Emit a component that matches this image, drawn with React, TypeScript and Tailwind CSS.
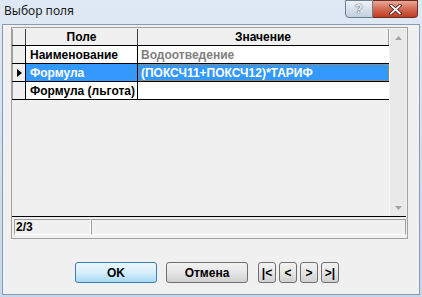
import React from 'react';

const gridFont = "font-['Liberation_Sans',sans-serif] font-bold text-[12px] leading-none";

const rows = [
  { field: 'Наименование', value: 'Водоотведение', selected: false, readOnly: true },
  { field: 'Формула', value: '(ПОКСЧ11+ПОКСЧ12)*ТАРИФ', selected: true, readOnly: false },
  { field: 'Формула (льгота)', value: '', selected: false, readOnly: false },
];

const NavButton = ({ label }: { label: string }) => (
  <button className="w-[18px] h-[21px] rounded-[3px] border border-[#707070] bg-gradient-to-b from-[#f2f2f2] via-[#e6e6e6] to-[#d0d0d0] flex items-center justify-center text-[12px] font-bold text-black font-['Liberation_Sans',sans-serif]">
    {label}
  </button>
);

const App = () => {
  return (
    <div className="w-[422px] h-[297px] bg-gradient-to-b from-[#dfe9f5] to-[#c4d7ec] flex flex-col overflow-hidden">
      {/* title bar */}
      <div className="h-[24px] flex justify-between items-start shrink-0">
        <span className="pl-[4px] pt-[5px] text-[12px] leading-none text-[#1a1a1a] font-['Noto_Sans',sans-serif]">Выбор поля</span>
        <div className="flex mr-[4px]">
          <div className="w-[28px] h-[18px] rounded-bl-[4px] border border-[#6e7d8f] bg-gradient-to-b from-[#edf2f8] to-[#c2d0e0] flex items-center justify-center">
            <span className="text-[12px] font-bold leading-none text-[#f4f7fb] font-['Liberation_Sans',sans-serif] [text-shadow:0_0_1px_#3a4654,0_0_1px_#3a4654]">?</span>
          </div>
          <div className="w-[45px] h-[18px] rounded-br-[4px] border border-l-0 border-[#6b2c22] bg-gradient-to-b from-[#e9a898] via-[#d26a53] to-[#c23a20] flex items-center justify-center">
            <svg width="13" height="11" viewBox="0 0 13 11">
              <path d="M2 1.5 L11 9.5 M11 1.5 L2 9.5" stroke="#4a1a12" strokeWidth="3.4" strokeLinecap="square" />
              <path d="M2 1.5 L11 9.5 M11 1.5 L2 9.5" stroke="#ffffff" strokeWidth="1.8" strokeLinecap="square" />
            </svg>
          </div>
        </div>
      </div>

      {/* client area */}
      <div className="mx-[2px] h-[271px] border border-[#8a9bb0] bg-[#f0f0f0] flex flex-col pl-[8px] pt-[2px]">
        {/* grid panel */}
        <div className="w-[397px] h-[212px] border border-[#a0a0a0] flex flex-col">
          <div className="h-[188px] flex pt-[1px]">
            {/* table */}
            <div className="w-[377px] flex flex-col">
              {/* header */}
              <div className={`h-[17px] flex border-b border-black bg-[#f0f0f0] ${gridFont}`}>
                <div className="w-[14px] border-r border-[#404040] border-l border-l-[#a0a0a0]" />
                <div className="w-[112px] border-r border-[#404040] flex items-center justify-center text-black">Поле</div>
                <div className="flex-1 border-r border-[#a0a0a0] flex items-center justify-center text-black">Значение</div>
              </div>
              {rows.map((r, i) => (
                <div key={i} className={`h-[18px] flex border-b border-black ${gridFont}`}>
                  <div className="w-[14px] border-r border-black border-l border-l-[#a0a0a0] bg-[#f0f0f0] flex items-center justify-center">
                    {r.selected && (
                      <svg width="5" height="8" viewBox="0 0 5 8">
                        <path d="M0 0 L5 4 L0 8 Z" fill="#000" />
                      </svg>
                    )}
                  </div>
                  <div className={`w-[112px] border-r border-black flex items-center pl-[4px] whitespace-nowrap ${r.selected ? 'bg-[#3399ff] text-white' : 'bg-white text-black'}`}>
                    {r.field}
                  </div>
                  <div className={`flex-1 flex items-center whitespace-nowrap ${r.selected ? 'bg-[#3399ff] text-white border border-dotted border-[#e07b1f] pl-[2px]' : 'bg-white pl-[3px]'} ${r.readOnly ? 'text-[#808080]' : ''}`}>
                    {r.value}
                  </div>
                </div>
              ))}
              <div className="flex-1 bg-[#f0f0f0]" />
            </div>
            {/* scrollbar */}
            <div className="w-[17px] bg-[#e9e9e9] border-l border-[#f7f7f7] flex flex-col justify-between">
              <div className="h-[17px] flex items-center justify-center">
                <svg width="7" height="4" viewBox="0 0 7 4">
                  <path d="M0 4 L3.5 0 L7 4 Z" fill="#a3a3a3" />
                </svg>
              </div>
              <div className="h-[17px] flex items-center justify-center">
                <svg width="7" height="4" viewBox="0 0 7 4">
                  <path d="M0 0 L3.5 4 L7 0 Z" fill="#a3a3a3" />
                </svg>
              </div>
            </div>
          </div>
          <div className="h-[1px] bg-black mr-[1px]" />
          {/* status bar */}
          <div className="flex-1 flex pl-[2px] pt-[2px] pr-[1px]">
            <div className="w-[77px] h-[16px] border border-t-[#a0a0a0] border-l-[#a0a0a0] border-b-white border-r-white flex items-center pl-[1px] text-[12px] font-bold leading-none text-black font-['Liberation_Sans',sans-serif]">
              2/3
            </div>
            <div className="flex-1 h-[16px] border border-t-[#a0a0a0] border-l-[#a0a0a0] border-b-white border-r-[#a0a0a0]" />
          </div>
        </div>

        {/* buttons */}
        <div className="flex items-center mt-[23px] pl-[64px]">
          <button className="w-[82px] h-[21px] rounded-[3px] border border-[#3c7fb1] bg-gradient-to-b from-[#eaf6fd] via-[#d7effc] to-[#a7d9f5] text-[12px] font-bold text-black font-['Liberation_Sans',sans-serif]">
            OK
          </button>
          <button className="ml-[9px] w-[82px] h-[21px] rounded-[3px] border border-[#707070] bg-gradient-to-b from-[#f2f2f2] via-[#e6e6e6] to-[#d0d0d0] text-[12px] font-bold text-black font-['Liberation_Sans',sans-serif]">
            Отмена
          </button>
          <div className="ml-[10px] flex gap-[3px]">
            <NavButton label="|<" />
            <NavButton label="<" />
            <NavButton label=">" />
            <NavButton label=">|" />
          </div>
        </div>
      </div>
    </div>
  );
};

export default App;
